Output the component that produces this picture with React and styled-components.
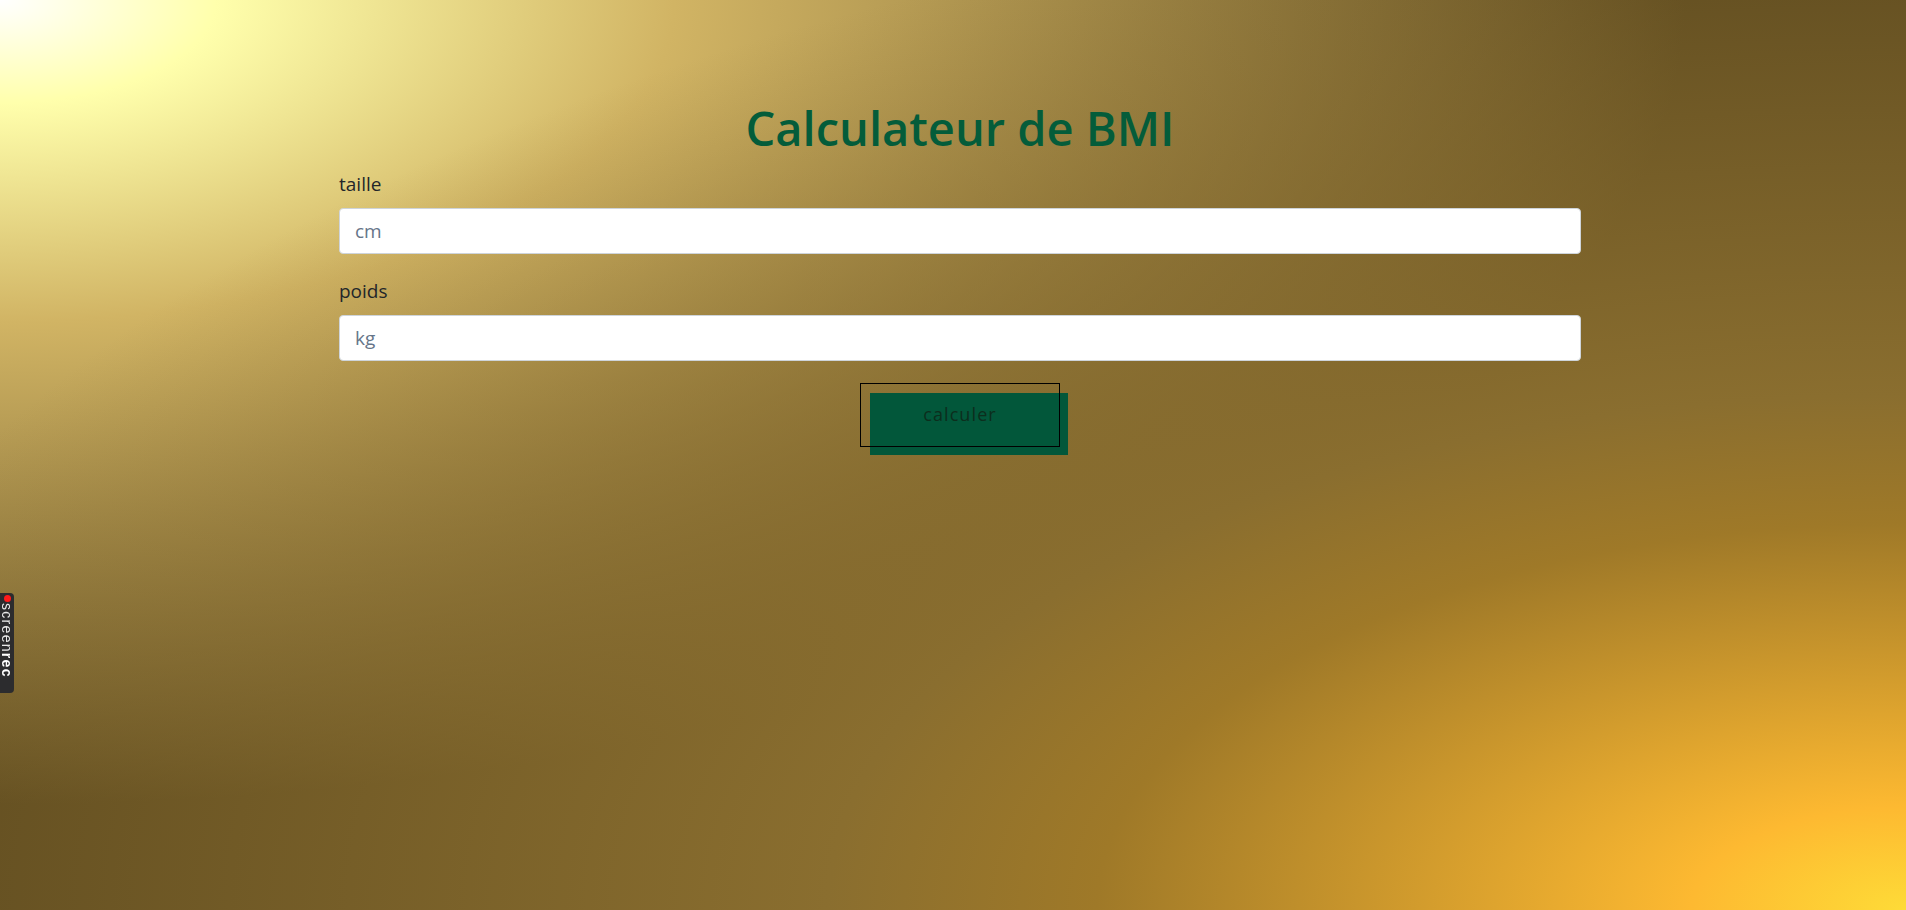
import React from 'react';
import styled, { createGlobalStyle } from 'styled-components';

const GlobalStyle = createGlobalStyle`
  html, body {
    margin: 0;
    padding: 0;
  }
  body {
    font-family: 'Open Sans', 'Noto Sans', sans-serif;
    color: #212529;
  }
`;

const Page = styled.div`
  min-height: 100vh;
  box-sizing: border-box;
  padding-top: 100px;
  background:
    radial-gradient(ellipse farthest-corner at right bottom, #fedb37 0%, #fdb931 8%, #9f7928 30%, #8a6e2f 40%, transparent 80%),
    radial-gradient(ellipse farthest-corner at left top, #ffffff 0%, #ffffac 8%, #d1b464 25%, #5d4a1f 62.5%, #5d4a1f 100%);
`;

const Container = styled.form`
  width: 1242px;
  margin-left: calc(50% - 614px);
  display: flex;
  flex-direction: column;
`;

const Title = styled.h1`
  margin: 0 0 11px;
  text-align: center;
  font-size: 47px;
  line-height: 57.6px;
  font-weight: 600;
  letter-spacing: 0;
  color: #045c3a;
`;

const Field = styled.div`
  display: flex;
  flex-direction: column;
  margin-bottom: ${props => props.last ? '23px' : '22px'};
`;

const Label = styled.label`
  font-size: 19px;
  line-height: 30px;
  margin-bottom: 9px;
  color: #23262a;
`;

const Input = styled.input`
  box-sizing: border-box;
  height: 46px;
  padding: 0 15px;
  border: 1px solid #ced4da;
  border-radius: 4px;
  background: #fff;
  font-family: inherit;
  font-size: 19px;
  color: #495057;
  outline: none;

  &::placeholder {
    color: #667589;
  }
`;

const ButtonRow = styled.div`
  display: flex;
  justify-content: center;
`;

const CalcButton = styled.button`
  position: relative;
  z-index: 0;
  width: 198px;
  height: 62px;
  padding: 0 0 1px;
  border: none;
  outline: 1px solid #000;
  background: transparent;
  font-family: inherit;
  font-size: 18px;
  letter-spacing: 1.1px;
  color: #0c2e1d;
  cursor: pointer;

  &::before {
    content: '';
    position: absolute;
    top: 9px;
    left: 9px;
    width: 100%;
    height: 100%;
    background: #02573a;
    z-index: -1;
  }
`;

const RecBadge = styled.div`
  position: fixed;
  left: 0;
  top: 593px;
  width: 14px;
  height: 100px;
  box-sizing: border-box;
  padding-top: 2px;
  background: #2c2c2e;
  border-radius: 0 4px 4px 0;
  display: flex;
  flex-direction: column;
  align-items: center;
`;

const RecDot = styled.span`
  flex: none;
  width: 7px;
  height: 7px;
  border-radius: 50%;
  background: #ff1a1a;
  margin-bottom: 1px;
`;

const RecText = styled.span`
  writing-mode: vertical-rl;
  font-family: 'Liberation Sans', Arial, sans-serif;
  font-size: 14px;
  line-height: 14px;
  letter-spacing: 1.3px;
  color: #e8e8e8;

  b {
    font-weight: 700;
    color: #fff;
  }
`;

const App = () => {
  return (
    <Page>
      <GlobalStyle />
      <Container onSubmit={e => e.preventDefault()}>
        <Title>Calculateur de BMI</Title>
        <Field>
          <Label htmlFor="taille">taille</Label>
          <Input id="taille" type="text" placeholder="cm" />
        </Field>
        <Field last>
          <Label htmlFor="poids">poids</Label>
          <Input id="poids" type="text" placeholder="kg" />
        </Field>
        <ButtonRow>
          <CalcButton type="submit">calculer</CalcButton>
        </ButtonRow>
      </Container>
      <RecBadge>
        <RecDot />
        <RecText>screen<b>rec</b></RecText>
      </RecBadge>
    </Page>
  );
};

export default App;
